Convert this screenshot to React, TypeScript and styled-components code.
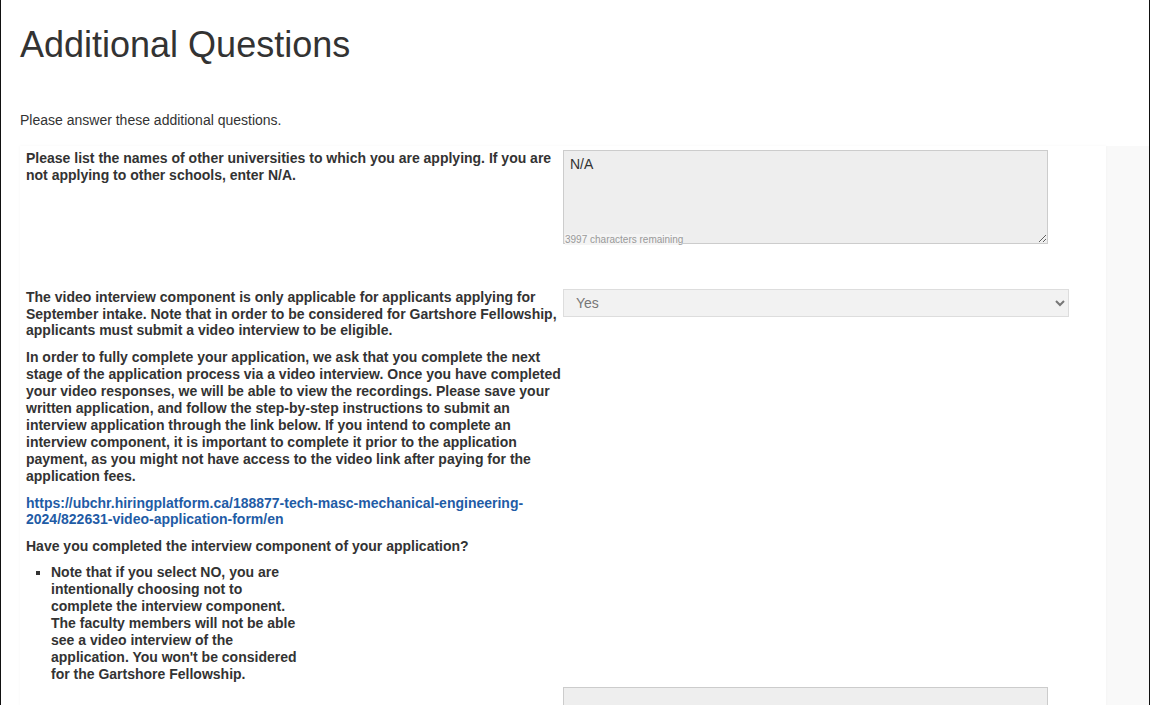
import styled, { createGlobalStyle } from "styled-components";

const GlobalStyle = createGlobalStyle`
  html, body {
    margin: 0;
    padding: 0;
    background: #fff;
  }
  body {
    font-family: "Liberation Sans", Arial, sans-serif;
    color: #333;
    font-size: 14px;
  }
`

const Frame = styled.div`
  min-height: 100vh;
  box-sizing: border-box;
  border-left: 1px solid #111;
  border-right: 1px solid #111;
  padding-left: 19px;
  overflow: hidden;
`

const Heading = styled.h1`
  margin: 25px 0 0;
  font-size: 36px;
  font-weight: 400;
  line-height: 1.1;
  color: #333;
`

const Intro = styled.p`
  margin: 47px 0 0;
  line-height: 17px;
`

const Section = styled.div`
  margin-top: 17px;
  background: #f9f9f9;
  min-height: 600px;
`

const Card = styled.div`
  width: 1086px;
  min-height: 600px;
  background: #fff;
  box-shadow: 0 0 3px rgba(0, 0, 0, 0.04);
  padding: 4px 0 0 6px;
  box-sizing: border-box;
`

const Row = styled.div<{ $space: number }>`
  display: flex;
  gap: 2px;
  margin-top: ${(p) => p.$space}px;
`

const Label = styled.div`
  width: 535px;
  flex-shrink: 0;
  font-weight: 700;
  line-height: 16.9px;
  p {
    margin: 0 0 10px;
  }
  p:last-child {
    margin-bottom: 0;
  }
`

const Link = styled.a`
  color: #1f5ca6;
  text-decoration: none;
`

const Notes = styled.ul`
  margin: -1px 0 0;
  padding-left: 25px;
  list-style: square;
  li {
    width: 250px;
  }
`

const Field = styled.div`
  position: relative;
  width: 485px;
  height: 94px;
`

const Area = styled.textarea`
  width: 100%;
  height: 100%;
  box-sizing: border-box;
  margin: 0;
  padding: 5px 6px;
  background: #eee;
  border: 1px solid #ccc;
  border-radius: 0;
  font-family: "Liberation Sans", Arial, sans-serif;
  font-size: 14px;
  color: #333;
  line-height: 1.2;
  resize: vertical;
  outline: none;
`

const Counter = styled.span`
  position: absolute;
  left: 2px;
  bottom: -1px;
  font-size: 10px;
  line-height: 11px;
  color: #999;
  background: #f4f4f4;
`

const Select = styled.select`
  width: 506px;
  height: 28px;
  margin: 0;
  padding: 0 8px;
  background: #f2f2f2;
  border: 1px solid #ddd;
  border-radius: 0;
  font-family: "Liberation Sans", Arial, sans-serif;
  font-size: 14px;
  color: #777;
`

function App() {
  return (
    <>
      <GlobalStyle />
      <Frame>
        <Heading>Additional Questions</Heading>
        <Intro>Please answer these additional questions.</Intro>
        <Section>
          <Card>
            <Row $space={0}>
              <Label>
                <p>
                  Please list the names of other universities to which you are applying. If you are
                  not applying to other schools, enter N/A.
                </p>
              </Label>
              <Field>
                <Area readOnly defaultValue="N/A" />
                <Counter>3997 characters remaining</Counter>
              </Field>
            </Row>
            <Row $space={45}>
              <Label>
                <p>
                  The video interview component is only applicable for applicants applying for
                  September intake. Note that in order to be considered for Gartshore Fellowship,
                  applicants must submit a video interview to be eligible.
                </p>
                <p>
                  In order to fully complete your application, we ask that you complete the next
                  stage of the application process via a video interview. Once you have completed
                  your video responses, we will be able to view the recordings. Please save your
                  written application, and follow the step-by-step instructions to submit an
                  interview application through the link below. If you intend to complete an
                  interview component, it is important to complete it prior to the application
                  payment, as you might not have access to the video link after paying for the
                  application fees.
                </p>
                <p>
                  <Link href="#">
                    https://ubchr.hiringplatform.ca/188877-tech-masc-mechanical-engineering-2024/822631-video-application-form/en
                  </Link>
                </p>
                <p>Have you completed the interview component of your application?</p>
                <Notes>
                  <li>
                    Note that if you select NO, you are intentionally choosing not to complete the
                    interview component. The faculty members will not be able see a video interview
                    of the application. You won't be considered for the Gartshore Fellowship.
                  </li>
                </Notes>
              </Label>
              <div>
                <Select defaultValue="Yes">
                  <option>Yes</option>
                  <option>No</option>
                </Select>
              </div>
            </Row>
            <Row $space={4}>
              <Label />
              <Field>
                <Area readOnly defaultValue="" />
              </Field>
            </Row>
          </Card>
        </Section>
      </Frame>
    </>
  )
}

export default App;
